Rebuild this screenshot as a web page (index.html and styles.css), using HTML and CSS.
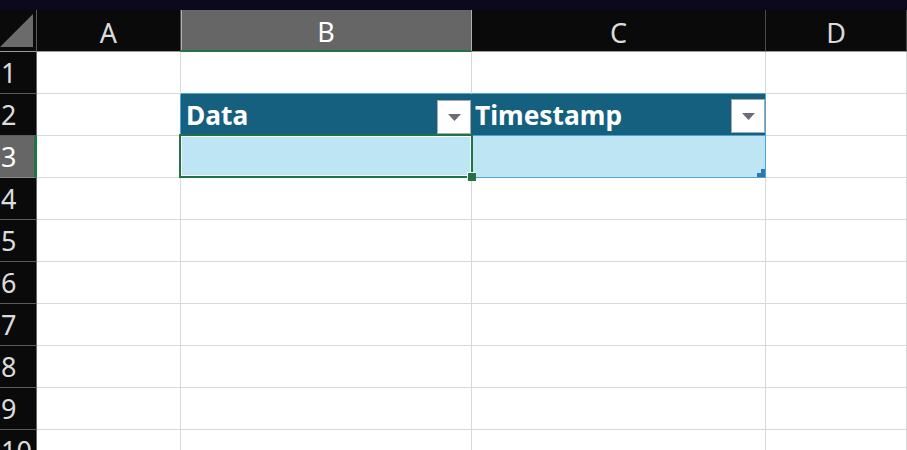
FILE: index.html
```html
<!DOCTYPE html>
<html>
<head>
<meta charset="utf-8">
<link rel="stylesheet" href="styles.css">
</head>
<body>
<div class="topbar"></div>
<div class="sheet">
  <div class="corner"><svg width="36" height="41" viewBox="0 0 36 41"><polygon points="0,37 33,4 33,37" fill="#6b6b6b"/></svg></div>
  <div class="colhdr">A</div>
  <div class="colhdr sel">B</div>
  <div class="colhdr">C</div>
  <div class="colhdr">D</div>

  <div class="rowhdr">1</div>
  <div class="cell"></div>
  <div class="cell tb-bottom"></div>
  <div class="cell tb-bottom"></div>
  <div class="cell"></div>

  <div class="rowhdr">2</div>
  <div class="cell tb-right"></div>
  <div class="cell th th-b"><span class="thtext">Data</span><span class="dd"><svg width="13" height="7" viewBox="0 0 13 7"><polygon points="0,0 13,0 6.5,7" fill="#6d6a7a"/></svg></span></div>
  <div class="cell th th-c"><span class="thtext">Timestamp</span><span class="dd"><svg width="13" height="7" viewBox="0 0 13 7"><polygon points="0,0 13,0 6.5,7" fill="#6d6a7a"/></svg></span></div>
  <div class="cell"></div>

  <div class="rowhdr sel">3</div>
  <div class="cell tb-right"></div>
  <div class="cell td active"><div class="selbox"><div class="handle"></div></div></div>
  <div class="cell td td-c"><svg class="resize" width="8" height="8" viewBox="0 0 8 8"><polygon points="4,0 8,0 8,8 0,8 0,4 4,4" fill="#2f78b0"/></svg></div>
  <div class="cell"></div>

  <div class="rowhdr">4</div><div class="cell"></div><div class="cell"></div><div class="cell"></div><div class="cell"></div>
  <div class="rowhdr">5</div><div class="cell"></div><div class="cell"></div><div class="cell"></div><div class="cell"></div>
  <div class="rowhdr">6</div><div class="cell"></div><div class="cell"></div><div class="cell"></div><div class="cell"></div>
  <div class="rowhdr">7</div><div class="cell"></div><div class="cell"></div><div class="cell"></div><div class="cell"></div>
  <div class="rowhdr">8</div><div class="cell"></div><div class="cell"></div><div class="cell"></div><div class="cell"></div>
  <div class="rowhdr">9</div><div class="cell"></div><div class="cell"></div><div class="cell"></div><div class="cell"></div>
  <div class="rowhdr">10</div><div class="cell"></div><div class="cell"></div><div class="cell"></div><div class="cell"></div>
</div>
</body>
</html>
```

FILE: styles.css
```css
html, body {
  margin: 0;
  padding: 0;
  background: #ffffff;
  overflow: hidden;
  width: 907px;
  height: 450px;
}
body {
  font-family: "Noto Sans", "Open Sans", sans-serif;
}
.topbar {
  height: 10px;
  background: #0d091c;
}
.sheet {
  display: grid;
  grid-template-columns: 37px 144px 291px 294px 1fr;
  grid-auto-rows: 42px;
}
.sheet > div {
  box-sizing: border-box;
  border-right: 1px solid #d9d9d9;
  border-bottom: 1px solid #d9d9d9;
}
.corner {
  background: #0a0a0a;
  border-right-color: #5a5a5a !important;
  border-bottom-color: #9a9a9a !important;
  overflow: hidden;
}
.corner svg { display: block; }
.colhdr {
  background: #0a0a0a;
  color: #dcdcdc;
  font-size: 27px;
  display: flex;
  align-items: center;
  justify-content: center;
  padding-top: 3px;
  border-right-color: #4a4a4a !important;
  border-bottom-color: #9a9a9a !important;
}
.colhdr.sel {
  background: #666666;
  color: #ffffff;
  border-bottom: 2px solid #217346 !important;
  border-right-color: #b0b0b0 !important;
  box-shadow: inset 1px 0 0 #b0b0b0;
}
.rowhdr {
  background: #0a0a0a;
  color: #dcdcdc;
  font-size: 27px;
  display: flex;
  align-items: center;
  padding-left: 1px;
  border-right-color: #666666 !important;
  border-bottom-color: #5a5a5a !important;
  overflow: hidden;
  white-space: nowrap;
}
.rowhdr.sel {
  background: #666666;
  color: #ffffff;
  border-right: 3px solid #217346 !important;
  border-bottom-color: #8a8a8a !important;
}
.cell { background: #ffffff; }
.tb-bottom { border-bottom-color: #4ea3d6 !important; }
.tb-right { border-right-color: #4ea3d6 !important; }
.th {
  background: #16607f;
  color: #ffffff;
  font-weight: 700;
  font-size: 26.3px;
  display: flex;
  align-items: flex-end;
  justify-content: space-between;
  padding-left: 5px;
  padding-bottom: 1px;
  border-bottom-color: #4ea3d6 !important;
}
.th-b { border-right-color: #16607f !important; }
.th-c { border-right-color: #4ea3d6 !important; padding-left: 3px; padding-bottom: 2px; }
.thtext {
  align-self: center;
  padding-top: 2px;
}
.dd {
  width: 34px;
  height: 34px;
  box-sizing: border-box;
  background: #ffffff;
  border: 1px solid #a8a8a8;
  display: flex;
  align-items: center;
  justify-content: center;
}
.td {
  background: #bee5f4;
  border-bottom-color: #4ea3d6 !important;
  position: relative;
}
.td-c {
  border-right-color: #4ea3d6 !important;
  display: flex;
  align-items: flex-end;
  justify-content: flex-end;
}
.resize { display: block; }
.active { border-right-color: #bee5f4 !important; }
.selbox {
  position: absolute;
  left: -2px;
  top: -2px;
  width: 294px;
  height: 44px;
  box-sizing: border-box;
  border: 2px solid #217346;
  box-shadow: inset 0 0 0 1px #ffffff;
  z-index: 2;
}
.handle {
  position: absolute;
  left: 286px;
  top: 36px;
  width: 9px;
  height: 9px;
  box-sizing: border-box;
  background: #217346;
  border-left: 1px solid #ffffff;
  border-top: 1px solid #ffffff;
}
```
